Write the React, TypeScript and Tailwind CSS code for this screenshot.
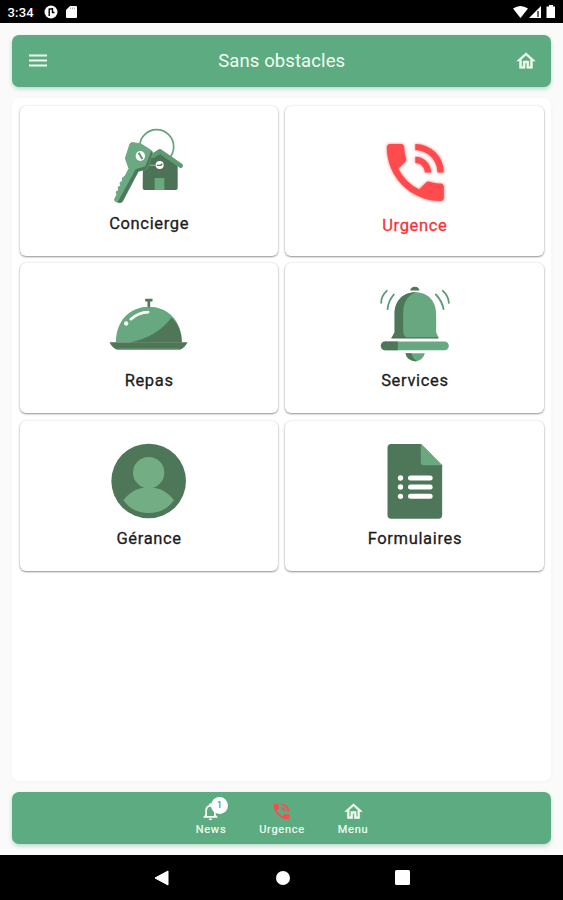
import type { ReactNode } from "react";

const PHONE =
  "M20 15.5c-1.25 0-2.45-.2-3.57-.57a1.02 1.02 0 0 0-1.02.24l-2.2 2.2a15.05 15.05 0 0 1-6.59-6.58l2.2-2.21a.96.96 0 0 0 .25-1A11.36 11.36 0 0 1 8.5 4c0-.55-.45-1-1-1H4c-.55 0-1 .45-1 1 0 9.39 7.61 17 17 17 .55 0 1-.45 1-1v-3.500c0-.55-.45-1-1-1zM19 12h2a9 9 0 0 0-9-9v2c3.870 0 7 3.130 7 7zm-4 0h2c0-2.760-2.240-5-5-5v2c1.660 0 3 1.340 3 3z";

function HomeIcon({ className }: { className: string }) {
  return (
    <svg viewBox="0 0 24 24" className={className} fill="currentColor">
      <path d="M12 5.690l5 4.500V18h-2v-6H9v6H7v-7.810l5-4.500M12 3L2 12h3v8h6v-6h2v6h6v-8h3L12 3z" stroke="currentColor" strokeWidth=".6" />
    </svg>
  );
}

function KeysIcon() {
  return (
    <svg viewBox="58 27 240 240" className="size-20">
      <circle cx="201" cy="95" r="51" fill="none" stroke="#62a47d" strokeWidth="5" />
      <path d="M160 130l50-22 54 44v67q0 6-6 6h-93q-6 0-6-6z" fill="#4d7357" />
      <path d="M195 189h29v36h-29z" fill="#6aa87e" />
      <path d="M190 122l21-13 62 43" fill="none" stroke="#5d9a71" strokeWidth="14" strokeLinecap="round" strokeLinejoin="round" />
      <path d="M121 87q3-5 9-4l24 4 30 19q6 4 4 11l-14 41q-2 5-7 6l-21 5-47 89q-3 6-10 5l-10-3q-7-3-3-10l6-11-3-8 8-5-2-9 8-5-2-9 8-5-1-9 8-5 12-23-10-28q-2-5 1-9z" fill="#6aa982" stroke="#6aa982" strokeWidth="3" strokeLinejoin="round" />
      <path d="M185 107q5 4 3 10l-14 41q-2 5-7 6l-21 5-47 89q-3 6-10 5l-5-2 54-98 29-9z" fill="#50775b" />
      <path d="M180 151h22" stroke="#79b68d" strokeWidth="4" />
      <circle cx="210" cy="150" r="12" fill="#fff" />
      <path d="M202 151h11l5-5" fill="none" stroke="#4d7357" strokeWidth="4" />
      <ellipse cx="152" cy="123" rx="14" ry="15" fill="#fff" />
      <path d="M147 113l11 19" stroke="#5a9770" strokeWidth="6" />
    </svg>
  );
}

function UrgenceIcon() {
  return (
    <svg viewBox="41.5 27 240 240" className="size-20 overflow-visible drop-shadow-[0_0_1.500px_#ff4b4bcc]">
      <g transform="translate(51.5 58.5) scale(9.500)">
        <path d={PHONE} fill="#ff4a4e" />
      </g>
    </svg>
  );
}

function ClocheIcon() {
  return (
    <svg viewBox="56.5 4.5 240 240" className="size-20">
      <path d="M165 59h22M176 59v25" stroke="#4d795a" strokeWidth="8" />
      <path d="M77 185C78 119 120 79 176 79s98 40 99 106z" fill="#68a880" />
      <path d="M244 111q31 29 31 75H118q83-16 126-75z" fill="#4e7657" />
      <path d="M58 185h234q-8 17-24 23H82q-16-6-24-23z" fill="#4e7657" />
      <path d="M83 206h184" stroke="#75b58b" strokeWidth="3" />
      <path d="M122 116q23-20 52-21" fill="none" stroke="#fff" strokeWidth="8" strokeLinecap="round" />
      <circle cx="108" cy="129" r="6.500" fill="#fff" />
    </svg>
  );
}

function BellIcon() {
  return (
    <svg viewBox="41.5 19.5 240 240" className="size-20">
      <path d="M150 45q2-10 14-11 12 1 14 11z" fill="#4e7658" />
      <path d="M98 187L104 170V115c0-39 25-65 62-65s62 26 62 65v55l7 17z" fill="#68a880" />
      <path d="M94 187L103 170V115c0-39 25-65 63-65q-37 16-37 62v53q0 14 9 22z" fill="#4e7658" />
      <path d="M94 187h141" stroke="#42694d" strokeWidth="4" />
      <rect x="62" y="198" width="204" height="26" rx="13" fill="#68a880" />
      <path d="M113 198H75a13 13 0 0 0 0 26h38z" fill="#4e7658" />
      <path d="M136 233h58q-4 20-29 25-25-5-29-25z" fill="#68a880" />
      <path d="M136 233h18q4 17 18 24-32 0-36-24z" fill="#4e7658" />
      <g fill="none" stroke="#5b9b74" strokeWidth="5.500" strokeLinecap="round">
        <path d="M80 46Q63 61 63 82M101 57Q84 77 82 101M248 46q17 15 18 36M227 57q19 20 23 44" />
      </g>
    </svg>
  );
}

function PersonIcon() {
  return (
    <svg viewBox="57 12 240 240" className="size-20">
      <circle cx="176" cy="138" r="112" fill="#4e7658" />
      <circle cx="176" cy="113" r="47" fill="#72ad83" />
      <path d="M100 196c17-23 44-39 76-39s59 16 76 39c-19 26-44 38-76 38s-57-12-76-38z" fill="#72ad83" />
    </svg>
  );
}

function FormIcon() {
  return (
    <svg viewBox="56.5 12 240 240" className="size-20">
      <path d="M108 27h90l63 64v149q0 11-11 11H108q-11 0-11-11V38q0-11 11-11z" fill="#4e7658" />
      <path d="M197 27l64 64h-55q-9 0-9-9z" fill="#6aa880" />
      <path d="M166 129h59M166 156h59M166 184h59" stroke="#fff" strokeWidth="15" strokeLinecap="round" />
      <g fill="#fff">
        <circle cx="136" cy="129" r="8" />
        <circle cx="136" cy="156" r="8" />
        <circle cx="136" cy="184" r="8" />
      </g>
    </svg>
  );
}

const cards: { label: string; icon: ReactNode; urgent?: boolean }[] = [
  { label: "Concierge", icon: <KeysIcon /> },
  { label: "Urgence", icon: <UrgenceIcon />, urgent: true },
  { label: "Repas", icon: <ClocheIcon /> },
  { label: "Services", icon: <BellIcon /> },
  { label: "Gérance", icon: <PersonIcon /> },
  { label: "Formulaires", icon: <FormIcon /> },
];

function StatusBar() {
  return (
    <div className="flex h-[22.5px] shrink-0 items-center bg-black pl-[7.500px] pr-[7px] pt-[2px] text-white">
      <span className="w-[36.500px] text-[13px] font-medium leading-none tracking-[0.200px]">3:34</span>
      <svg viewBox="0 0 14 14" className="size-[14px]">
        <circle cx="7" cy="7" r="6.500" fill="#fff" />
        <path d="M5.200 3.500v7.500M8.500 3v5M5 4h3M8 7.500h2.500" stroke="#000" strokeWidth="1.400" fill="none" />
      </svg>
      <svg viewBox="0 0 11 12" className="ml-[7.500px] h-3 w-[11px]">
        <path d="M4 0h6q1 0 1 1v10q0 1-1 1H1q-1 0-1-1V4z" fill="#fff" />
        <path d="M4.500 1.500v1.500M6.500 1.500v1.500M8.500 1.500v1.500" stroke="#aaa" />
      </svg>
      <svg viewBox="0 0 43 14" className="ml-auto h-[14px] w-[43px]">
        <path d="M0 3.500Q7.500-1.500 15 3.500L7.500 13z" fill="#fff" />
        <path d="M16 13L28 1v12z" fill="#fff" />
        <path d="M25 6v6" stroke="#333" strokeWidth="1.500" />
        <path d="M36 0h4v1.500h2V13h-8.500V1.500H36z" fill="#fff" />
      </svg>
    </div>
  );
}

export default function App() {
  return (
    <div className="flex h-[900px] w-[563px] flex-col overflow-hidden bg-[#fafafa] font-[Roboto,sans-serif]">
      <StatusBar />
      <main className="flex min-h-0 flex-1 flex-col px-[12px] pb-[11px] pt-[12px]">
        <header className="flex h-[52px] shrink-0 items-center justify-between rounded-[7px] bg-[#5dab80] pl-[17px] pr-[14px] text-[#f3fff3] shadow-[0_2px_4px_#5dab8066]">
          <svg viewBox="0 0 18 13" className="h-[13px] w-[18px]">
            <path d="M0 1.500h18M0 6.500h18M0 11.500h18" stroke="currentColor" strokeWidth="1.900" />
          </svg>
          <h1 className="pl-[1.500px] text-[18.500px] font-normal leading-6 tracking-[0.1px]">Sans obstacles</h1>
          <HomeIcon className="size-[22px]" />
        </header>

        <section className="mt-[11.500px] min-h-0 flex-1 rounded-[7px] bg-white px-[7.500px] pt-[7.500px] shadow-[0_1px_4px_#00000008]">
          <div className="grid grid-cols-2 gap-[7.500px]">
            {cards.map((card) => (
              <div
                key={card.label}
                className="flex h-[150px] flex-col items-center rounded-[6px] bg-white pt-[18.500px] shadow-[0_1px_2px_#00000066,0_0_3px_#0000001a]"
              >
                {card.icon}
                <span
                  className={
                    card.urgent
                      ? "mt-[11.500px] pl-px text-[16.500px] leading-5 tracking-[0.650px] text-[#fb3038] [-webkit-text-stroke:0.3px]"
                      : "mt-[9.500px] pl-px text-[16.500px] leading-5 tracking-[0.650px] text-[#1c1c1c] [-webkit-text-stroke:0.3px]"
                  }
                >
                  {card.label}
                </span>
              </div>
            ))}
          </div>
        </section>

        <nav className="mt-[11.500px] flex h-[52px] shrink-0 justify-center rounded-[7px] bg-[#5dab80] pt-[9px] text-[#f3fff3] shadow-[0_2px_4px_#5dab8066]">
          <div className="flex w-[71px] flex-col items-center">
            <div className="relative">
              <svg viewBox="0 0 24 24" className="size-[21px]" fill="currentColor">
                <path d="M12 22c1.100 0 2-.900 2-2h-4c0 1.100.900 2 2 2zm6-6v-5c0-3.070-1.630-5.640-4.500-6.320V4a1.500 1.500 0 0 0-3 0v.680C7.640 5.360 6 7.920 6 11v5l-2 2v1h16v-1l-2-2zm-2 1H8v-6c0-2.480 1.510-4.500 4-4.500s4 2.020 4 4.500v6z" />
              </svg>
              <span className="absolute -top-[4px] left-[11px] flex size-[17px] items-center justify-center rounded-full bg-white text-[9px] leading-none text-[#3c684d]">1</span>
            </div>
            <span className="pt-px pl-px text-[11px] leading-[14px] tracking-[0.750px] [-webkit-text-stroke:0.2px]">News</span>
          </div>
          <div className="flex w-[71px] flex-col items-center">
            <svg viewBox="0 0 24 24" className="size-[21px]">
              <path d={PHONE} fill="#ff4a4e" />
            </svg>
            <span className="pt-px pl-px text-[11px] leading-[14px] tracking-[0.750px] [-webkit-text-stroke:0.2px]">Urgence</span>
          </div>
          <div className="flex w-[71px] flex-col items-center">
            <HomeIcon className="ml-px size-[21px]" />
            <span className="pt-px pl-px text-[11px] leading-[14px] tracking-[0.750px] [-webkit-text-stroke:0.2px]">Menu</span>
          </div>
        </nav>
      </main>

      <div className="flex h-[45px] shrink-0 items-center justify-center gap-[105px] bg-black">
        <svg viewBox="0 0 15 16" className="mr-[2px] h-4 w-[15px]">
          <path d="M14 1v14L1 8z" fill="#fff" stroke="#fff" strokeLinejoin="round" />
        </svg>
        <div className="size-[14px] rounded-full bg-white" />
        <div className="size-[15px] rounded-[1.500px] bg-white" />
      </div>
    </div>
  );
}
